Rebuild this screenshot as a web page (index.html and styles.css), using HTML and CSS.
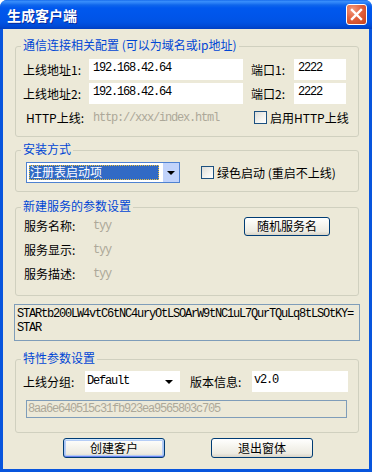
FILE: index.html
```html
<!DOCTYPE html>
<html lang="zh-CN">
<head>
<meta charset="utf-8">
<title>生成客户端</title>
<link rel="stylesheet" href="styles.css">
</head>
<body>
<div class="window">
  <div class="titlebar">
    <span class="title">生成客户端</span>
    <span class="close" aria-label="关闭">
      <svg width="13" height="13" viewBox="0 0 13 13"><path d="M2 2 L11 11 M11 2 L2 11" stroke="#fff" stroke-width="2.4" stroke-linecap="square" fill="none"/></svg>
    </span>
  </div>
  <div class="client">
    <fieldset class="group g1">
      <legend>通信连接相关配置 (可以为域名或ip地址)</legend>
      <div class="row">
        <span class="lbl">上线地址1:</span>
        <span class="edit ip mono">192.168.42.64</span>
        <span class="lbl port">端口1:</span>
        <span class="edit pv mono">2222</span>
      </div>
      <div class="row">
        <span class="lbl">上线地址2:</span>
        <span class="edit ip mono">192.168.42.64</span>
        <span class="lbl port">端口2:</span>
        <span class="edit pv mono">2222</span>
      </div>
      <div class="row">
        <span class="lbl http">HTTP上线:</span>
        <span class="url mono">http://xxx/index.html</span>
        <span class="check"></span>
        <span class="checktext">启用HTTP上线</span>
      </div>
    </fieldset>

    <fieldset class="group g2">
      <legend>安装方式</legend>
      <div class="row">
        <div class="combo sel">
          <span class="combofield"><span class="selitem">注册表启动项</span></span>
          <span class="dropbtn"><span class="tri"></span></span>
        </div>
        <span class="check c2"></span>
        <span class="checktext">绿色启动 (重启不上线)</span>
      </div>
    </fieldset>

    <fieldset class="group g3">
      <legend>新建服务的参数设置</legend>
      <div class="svcrows">
        <div class="svc">
          <span class="svclbl">服务名称:</span>
          <span class="gray mono">tyy</span>
          <span class="btn randbtn">随机服务名</span>
        </div>
        <div class="svc">
          <span class="svclbl">服务显示:</span>
          <span class="gray mono">tyy</span>
        </div>
        <div class="svc">
          <span class="svclbl">服务描述:</span>
          <span class="gray mono">tyy</span>
        </div>
      </div>
    </fieldset>

    <div class="memo mono">STARtb200LW4vtC6tNC4uryOtLSOArW9tNC1uL7QurTQuLq8tLSOtKY=<br>STAR</div>

    <fieldset class="group g4">
      <legend>特性参数设置</legend>
      <div class="row r4">
        <span class="lbl4">上线分组:</span>
        <div class="combo flat">
          <span class="combotext mono">Default</span>
          <span class="flatbtn"><span class="tri"></span></span>
        </div>
        <span class="lbl4 ver">版本信息:</span>
        <span class="edit verv mono">v2.0</span>
      </div>
      <div class="hash mono">8aa6e640515c31fb923ea9565803c705</div>
    </fieldset>

    <div class="buttons">
      <span class="btn main default">创建客户</span>
      <span class="btn main">退出窗体</span>
    </div>
  </div>
</div>
</body>
</html>
```

FILE: styles.css
```css
* { box-sizing: border-box; }
html, body { margin: 0; padding: 0; }
body {
  width: 372px;
  height: 472px;
  overflow: hidden;
  background: #ffffff;
  font-family: "Noto Sans CJK SC", "Noto Sans", sans-serif;
  font-size: 12px;
  line-height: 14px;
  color: #000;
}
.mono {
  font-family: "Liberation Mono", "Noto Sans CJK SC", monospace;
  font-size: 12px;
  letter-spacing: -1.2px;
}
.window {
  width: 372px;
  height: 472px;
  display: flex;
  flex-direction: column;
  background: #0855DD;
  border-radius: 7px 7px 0 0;
  overflow: hidden;
}
.titlebar {
  height: 29px;
  flex: none;
  display: flex;
  align-items: center;
  padding: 0 5px 0 7px;
  background: linear-gradient(to bottom, #0B5FE6 0px, #3A90FC 1px, #2A80F6 3px, #0F66EC 5px, #0058EE 8px, #0055EA 16px, #0053E4 22px, #004AD6 26px, #003FC2 29px);
}
.title {
  flex: 1;
  color: #fff;
  font-weight: bold;
  font-size: 14px;
  line-height: 16px;
  text-shadow: 1px 1px 0 #0A2A9A;
}
.close {
  width: 21px;
  height: 21px;
  border: 1px solid #fff;
  border-radius: 3px;
  background: radial-gradient(circle at 30% 25%, #F39A7E 0%, #E2623E 45%, #C8401A 100%);
  display: flex;
  align-items: center;
  justify-content: center;
}
.client {
  flex: 1;
  margin: 0 3px 3px;
  background: #ECE9D8;
  padding: 9px 10px 0 12px;
  display: flex;
  flex-direction: column;
}
.group {
  margin: 0;
  width: 344px;
  min-width: 0;
  border: 1px solid #D0D0BF;
  border-radius: 3px;
  padding: 5px 7px 8px 7px;
}
.group legend {
  padding: 0 2px 2px;
  margin-left: -2px;
  color: #0046D5;
  line-height: 14px;
}
.g2 { margin-top: 5px; padding-top: 4px; padding-bottom: 8px; }
.g3 { margin-top: 7px; padding-top: 1px; padding-bottom: 11px; }
.g4 { margin-top: 10px; padding-top: 4px; padding-bottom: 14px; }

.row {
  display: flex;
  align-items: center;
  height: 21px;
}
.g1 .row + .row { margin-top: 3px; }
.lbl { width: 66px; flex: none; }
.lbl.http { padding-left: 3px; }
.lbl.port { width: 43px; margin-left: 8px; }
.edit {
  height: 21px;
  background: #fff;
  padding-left: 4px;
  line-height: 19px;
  flex: none;
  white-space: nowrap;
}
.ip { width: 154px; }
.pv { width: 52px; }
.url { width: 165px; padding-left: 4px; color: #ACA899; flex: none; }
.check {
  width: 13px;
  height: 13px;
  flex: none;
  border: 1px solid #1C5180;
  background: linear-gradient(135deg, #DCDCD7 0%, #F4F4F0 60%, #FFFFFF 100%);
}
.checktext { margin-left: 3px; white-space: nowrap; }

.combo { display: flex; flex: none; height: 21px; }
.combo.sel {
  width: 154px;
  margin-left: 3px;
  border: 1px solid #4F82D1;
  background: #fff;
}
.combofield { flex: 1; padding: 2px 4px 2px 2px; display: flex; }
.selitem {
  flex: 1;
  background: #316AC5;
  color: #fff;
  outline: 1px dotted #E8C040;
  outline-offset: -1px;
  line-height: 13px;
  padding-left: 1px;
}
.dropbtn {
  width: 16px;
  flex: none;
  background: #C1D3FB;
  display: flex;
  align-items: center;
  justify-content: center;
}
.tri {
  width: 0; height: 0;
  border-left: 4px solid transparent;
  border-right: 4px solid transparent;
  border-top: 4px solid #000;
}
.check.c2 { margin-left: 21px; }

.svcrows { display: flex; flex-direction: column; gap: 4px; }
.svc { display: flex; align-items: center; height: 20px; }
.svclbl { width: 70px; padding-left: 1px; flex: none; }
.gray { color: #ACA899; width: 151px; flex: none; }
.btn {
  display: flex;
  align-items: center;
  justify-content: center;
  border: 1px solid #003C74;
  border-radius: 3px;
  background: linear-gradient(to bottom, #FFFFFF 0%, #F6F5EF 40%, #EDEBE2 80%, #D8D3C6 100%);
  flex: none;
}
.randbtn { width: 86px; height: 19px; }

.memo {
  margin-top: 8px;
  margin-left: -1px;
  width: 346px;
  height: 37px;
  border: 1px solid #7F9DB9;
  padding: 2px 2px 0;
  line-height: 14px;
  flex: none;
}
.r4 { height: 21px; }
.lbl4 { width: 62px; flex: none; }
.lbl4.ver { margin-left: 10px; }
.combo.flat { width: 95px; background: #fff; }
.combotext { flex: 1; padding-left: 2px; line-height: 21px; }
.flatbtn {
  width: 16px;
  display: flex;
  align-items: center;
  justify-content: center;
  margin-right: 3px;
}
.verv { width: 96px; padding-left: 2px; }
.hash {
  margin-top: 8px;
  margin-left: 3px;
  width: 321px;
  height: 18px;
  border: 1px solid #7F9DB9;
  color: #ACA899;
  padding-left: 1px;
  line-height: 16px;
}
.buttons {
  display: flex;
  gap: 46px;
  margin-top: 5px;
  padding-left: 48px;
}
.btn.main { width: 102px; height: 20px; }
.btn.default {
  box-shadow: inset 0 1px 0 #CEE7FF, inset 0 -1px 0 #6982EE, inset 1px 0 0 #A9C4F5, inset -1px 0 0 #A9C4F5, inset 0 0 0 2px #B5CDF6;
}
```
